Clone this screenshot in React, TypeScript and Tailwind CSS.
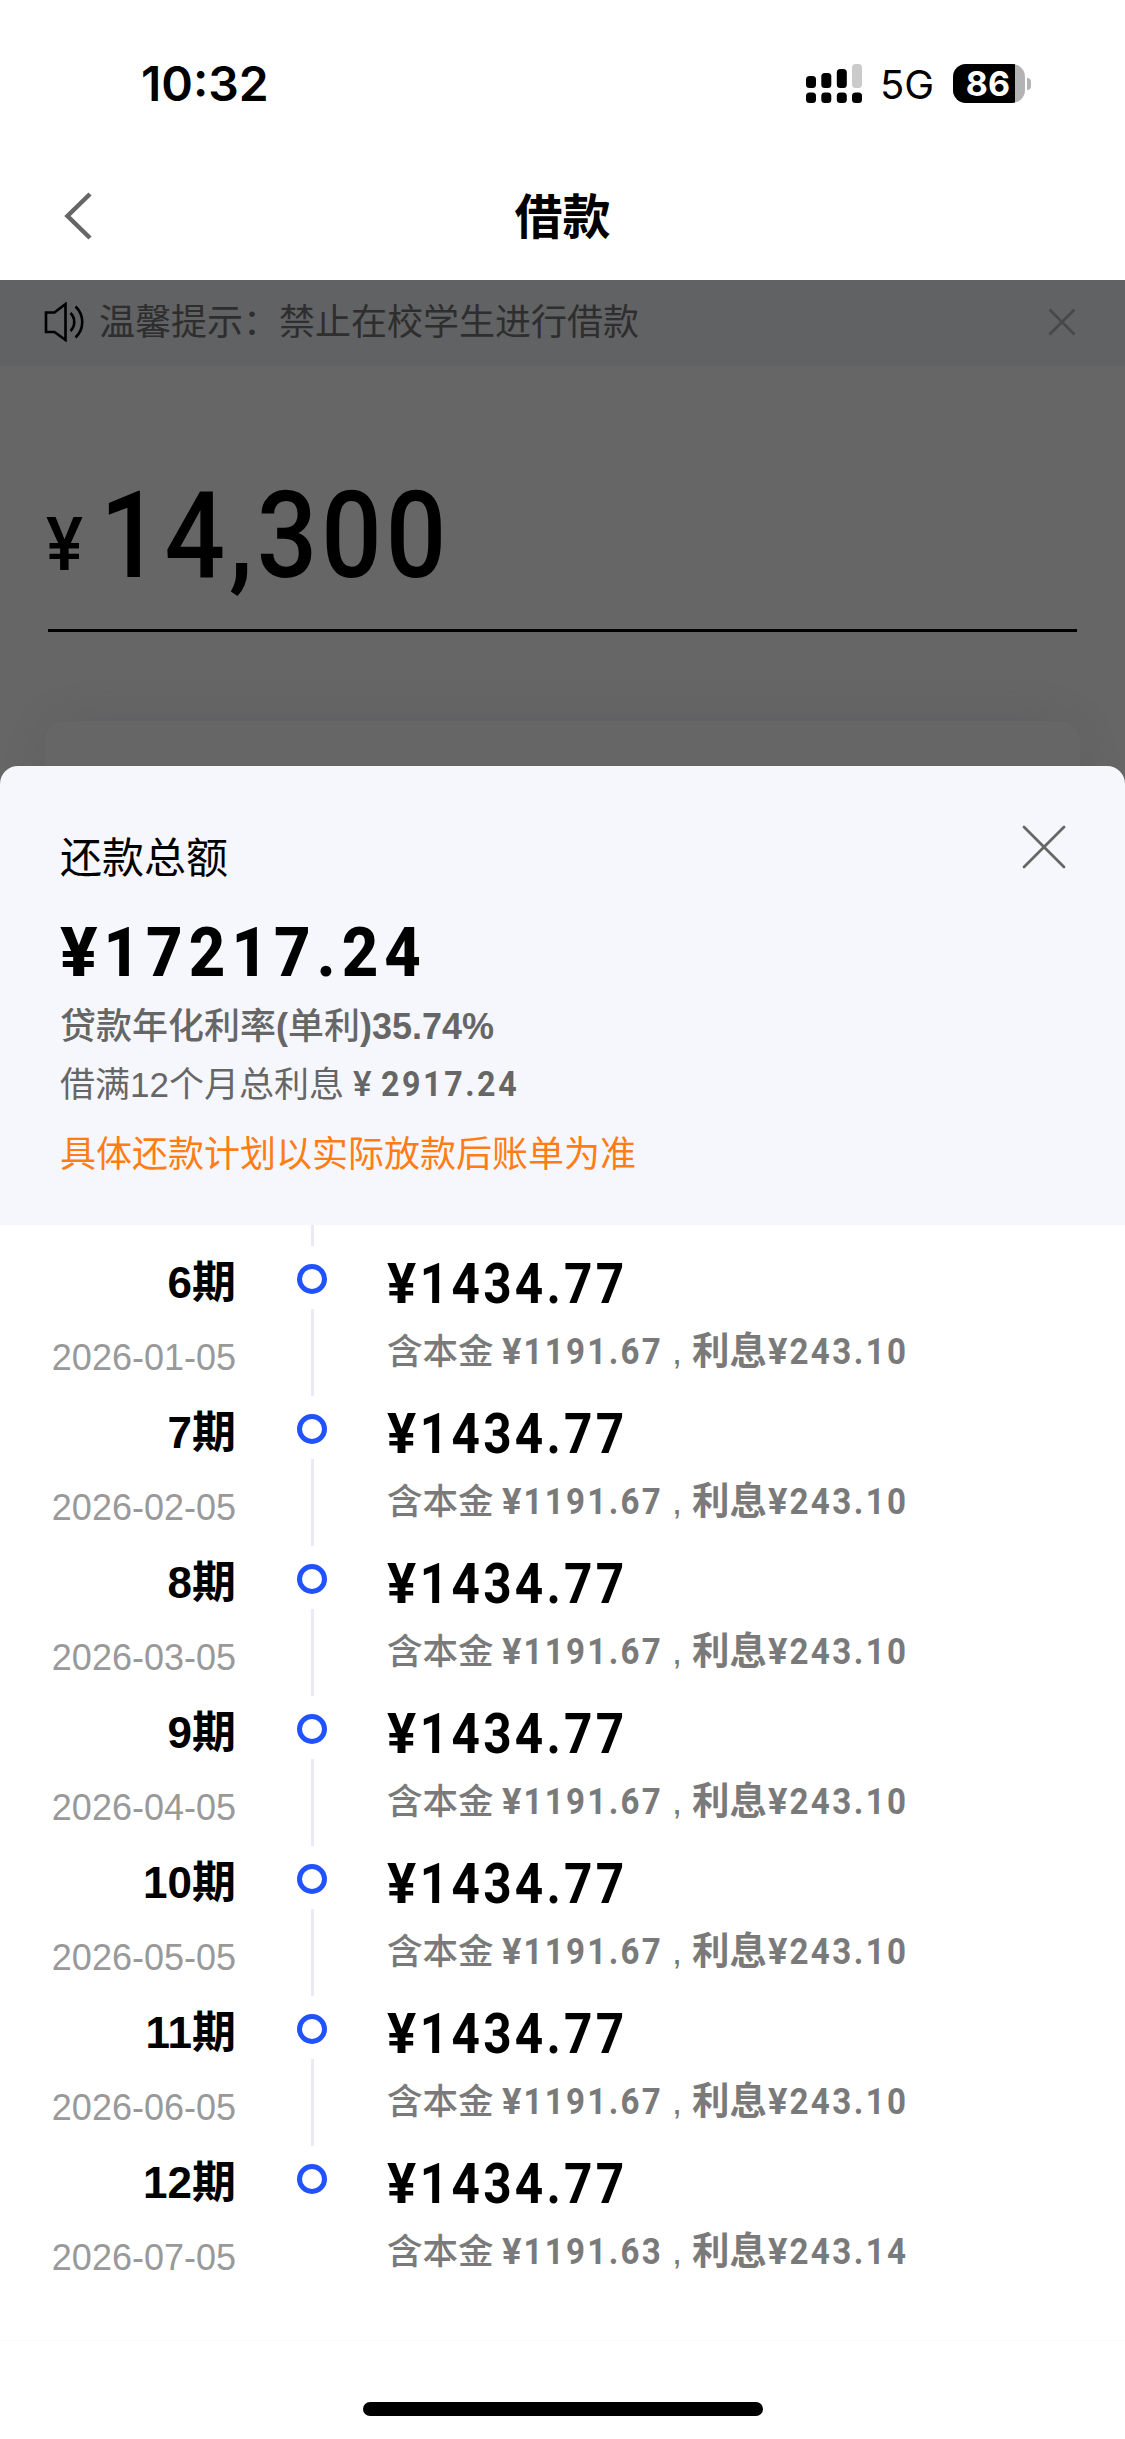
const periods = [
  { no: 6, date: "2026-01-05", principal: "1191.67", interest: "243.10" },
  { no: 7, date: "2026-02-05", principal: "1191.67", interest: "243.10" },
  { no: 8, date: "2026-03-05", principal: "1191.67", interest: "243.10" },
  { no: 9, date: "2026-04-05", principal: "1191.67", interest: "243.10" },
  { no: 10, date: "2026-05-05", principal: "1191.67", interest: "243.10" },
  { no: 11, date: "2026-06-05", principal: "1191.67", interest: "243.10" },
  { no: 12, date: "2026-07-05", principal: "1191.63", interest: "243.14" },
];

function StatusBar() {
  return (
    <div className="flex h-[158px] items-start font-['Inter',sans-serif] text-black">
      <span className="ml-[141px] mt-[60px] text-[48px] font-semibold leading-none">10:32</span>
      <div className="ml-auto mr-[94px] mt-[64px] flex h-[39px] items-center">
        <svg width="56" height="39" viewBox="0 0 56 39">
          <rect x="0" y="12" width="10" height="12" rx="3.5" />
          <rect x="15.3" y="9" width="10" height="15" rx="3.5" />
          <rect x="30.8" y="5" width="10" height="19" rx="3.5" />
          <rect x="46" y="0" width="10" height="24" rx="3.5" fill="#cbcbcb" />
          <rect x="0" y="28.5" width="10" height="10.5" rx="3.5" />
          <rect x="15.3" y="28.5" width="10" height="10.5" rx="3.5" />
          <rect x="30.8" y="28.5" width="10" height="10.5" rx="3.5" />
          <rect x="46" y="28.5" width="10" height="10.5" rx="3.5" />
        </svg>
        <span className="ml-[18px] w-[73px] pt-[2px] text-[40px] leading-[40px]">5G</span>
        <div className="flex h-[39px] w-[72px] overflow-hidden rounded-[13px] bg-[#b3b3b3]">
          <span className="flex w-[62px] items-center justify-end bg-black pr-[5px] text-[34px] font-bold leading-none text-white">
            86
          </span>
        </div>
        <div className="ml-[2px] h-[12px] w-[4px] rounded-r-full bg-[#b3b3b3]" />
      </div>
    </div>
  );
}

function NavBar() {
  return (
    <div className="grid h-[122px] grid-cols-3 items-center">
      <svg className="-mt-[6px] ml-[64px]" width="30" height="48" viewBox="0 0 30 48" fill="none" stroke="#666" strokeWidth="4.5">
        <path d="M26 2 3.5 24 26 46" />
      </svg>
      <h1 className="-mt-[2px] text-center text-[48px] font-bold leading-none text-black">借款</h1>
    </div>
  );
}

function LoanForm() {
  return (
    <section className="relative h-[506px] overflow-hidden bg-white">
      <div className="flex h-[86px] items-center bg-[#f2f4f8] pb-[2px]">
        <svg className="ml-[44px]" width="42" height="40" viewBox="0 0 42 40" fill="none" stroke="#000" strokeWidth="2.6">
          <path d="M2 10.5h8.5L21.5 2v36L10.5 30H2zM26.5 11c5 5 5 13 0 18M31.5 4.500c9 8.500 9 22.500 0 31" />
        </svg>
        <p className="ml-[13px] mt-[2px] text-[36px] leading-none text-[#737373]">温馨提示：禁止在校学生进行借款</p>
        <svg className="ml-auto mr-[49px]" width="28" height="28" viewBox="0 0 28 28" stroke="#b4b4b4" strokeWidth="2.6">
          <path d="m1.500 1.500 25 25m0-25-25 25" />
        </svg>
      </div>

      <div className="flex h-[230px] items-start pl-[46px] pt-[110px] font-['Roboto',sans-serif] font-medium text-black">
        <span className="mt-[32px] w-[54px] origin-left scale-x-[0.94] text-[74px] leading-none">¥</span>
        <span className="origin-left scale-x-[0.88] text-[121px] leading-none tracking-[4.500px]">14,300</span>
      </div>
      <div className="mx-[48px] mt-[33px] h-[3px] bg-black" />
      <div className="mx-[45px] mt-[89px] h-[120px] rounded-[20px] bg-white shadow-[0_0_60px_rgba(60,60,140,0.1)]" />

      <div className="absolute inset-0 bg-black/60" />
    </section>
  );
}

function SheetHeader() {
  return (
    <div className="flex h-[459px] justify-between rounded-t-[18px] bg-[#f6f7fc] pl-[60px] pt-[72px]">
      <div>
        <h2 className="text-[42px] leading-none text-black">还款总额</h2>
        <p className="mt-[38px] origin-left scale-x-[0.92] font-['Roboto',sans-serif] text-[69px] font-extrabold leading-none tracking-[6.600px] text-black">
          <span className="inline-block origin-left scale-x-110 tracking-[10px]">¥</span>17217.24
        </p>
        <p className="mt-[22px] text-[36px] font-medium leading-none text-[#666]">
          贷款年化利率<span className="font-bold">(</span>单利<span className="font-bold">)35.74%</span>
        </p>
        <p className="mt-[22px] flex text-[35px] leading-none text-[#666]">
          <span className="w-[293px]">借满12个月总利息</span>
          <span className="w-[28px] font-['Roboto',sans-serif] font-medium">¥</span>
          <span className="origin-left scale-x-[0.92] font-['Roboto',sans-serif] font-bold tracking-[2.800px]">2917.24</span>
        </p>
        <p className="mt-[35px] text-[36px] leading-none text-[#ff7d14]">具体还款计划以实际放款后账单为准</p>
      </div>
      <svg className="-mt-[13px] mr-[59px]" width="44" height="44" viewBox="0 0 44 44" stroke="#666" strokeWidth="2.8" strokeLinecap="round">
        <path d="m2 2 40 40m0-40L2 42" />
      </svg>
    </div>
  );
}

function PeriodRow({ period, last }: { period: (typeof periods)[number]; last: boolean }) {
  return (
    <li className="flex h-[150px]">
      <div className="w-[236px] pt-[15px] text-right">
        <p className="text-[44px] font-bold leading-none text-black">{period.no}期</p>
        <p className="mt-[35px] text-[36px] leading-none text-[#999]">{period.date}</p>
      </div>
      <div className="ml-[61px] flex w-[30px] flex-col items-center pt-[18px]">
        <span className="size-[30px] shrink-0 rounded-full border-[5.500px] border-[#2152ff]" />
        {!last && <span className="mt-[15px] w-[3px] flex-1 bg-[#e9eaf5]" />}
      </div>
      <div className="ml-[60px] pt-[11px]">
        <p className="origin-left scale-x-[0.9] font-['Roboto',sans-serif] text-[55px] font-bold leading-none tracking-[3.600px] text-black">
          <span className="inline-block origin-left scale-x-110 tracking-[7px]">¥</span>1434.77
        </p>
        <p className="mt-[21px] flex items-baseline text-[36px] leading-none text-[#7a7a7a]">
          <span className="w-[115px] text-[35.500px] font-medium">含本金</span>
          <span className="w-[170px] origin-left scale-x-[0.92] font-['Roboto',sans-serif] font-bold tracking-[2.500px]">
            <span className="inline-block origin-left scale-x-110 tracking-[4px]">¥</span>{period.principal}
          </span>
          <span className="w-[20px]">,</span>
          <span className="w-[76px] text-[37.500px] font-bold">利息</span>
          <span className="origin-left scale-x-[0.92] font-['Roboto',sans-serif] font-bold tracking-[2.600px]">
            <span className="inline-block origin-left scale-x-110 tracking-[4px]">¥</span>{period.interest}
          </span>
        </p>
      </div>
    </li>
  );
}

export default function App() {
  return (
    <main className="h-[2439px] w-[1125px] overflow-hidden whitespace-nowrap bg-white font-['Liberation_Sans','Noto_Sans_CJK_SC',sans-serif]">
      <StatusBar />
      <NavBar />
      <LoanForm />

      {/* Repayment plan sheet */}
      <section className="relative -mt-[20px]">
        <SheetHeader />
        <div className="ml-[311px] h-[21px] w-[3px] bg-[#e9eaf5]" />
        <ul className="h-[1095px] border-b border-[#fafafa]">
          {periods.map((p, i) => (
            <PeriodRow key={p.no} period={p} last={i === periods.length - 1} />
          ))}
        </ul>
      </section>

      <div className="mx-auto mt-[61px] h-[14px] w-[400px] rounded-full bg-black" />
    </main>
  );
}
